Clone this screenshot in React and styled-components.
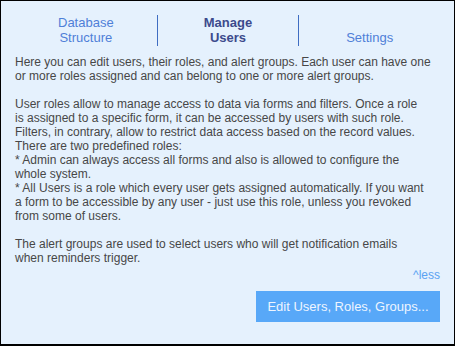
import styled, { createGlobalStyle } from "styled-components";

const Global = createGlobalStyle`
  html, body {
    margin: 0;
    padding: 0;
    background: #fff;
  }
`;

export const Panel = styled.div`
  width: 455px;
  height: 346px;
  box-sizing: border-box;
  border: 1px solid #000;
  border-bottom-width: 2px;
  background: #e5f1fd;
  font-family: "Liberation Sans", Arial, sans-serif;
  padding: 14px 14px 0 14px;
`;

export const Tabs = styled.div`
  display: grid;
  grid-template-columns: 1fr 1fr 1fr;
  height: 31px;
  margin-bottom: 9px;
`;

export const Tab = styled.div`
  display: flex;
  align-items: flex-end;
  justify-content: center;
  text-align: center;
  font-size: 13px;
  line-height: 15px;
  color: ${(p) => (p.$active ? "#3c4a8c" : "#4f7fd8")};
  font-weight: ${(p) => (p.$active ? 700 : 400)};
  border-left: ${(p) => (p.$divider ? "1px solid #3f6dc2" : "none")};
  padding-bottom: 1px;
`;

export const Text = styled.p`
  margin: 0 0 14px 0;
  font-size: 12px;
  line-height: 14px;
  color: #474747;
  white-space: nowrap;
`;

export const Less = styled.div`
  text-align: right;
  font-size: 12px;
  line-height: 14px;
  color: #5aa2f2;
  margin-top: -11px;
`;

export const ButtonRow = styled.div`
  display: flex;
  justify-content: flex-end;
  margin-top: 9px;
`;

export const Button = styled.button`
  background: #58a8f8;
  color: #eef5ff;
  border: none;
  font-family: "Liberation Sans", Arial, sans-serif;
  font-size: 13px;
  height: 31px;
  width: 184px;
  padding: 0;
`;

export default function App() {
  return (
    <>
      <Global />
      <Panel>
        <Tabs>
          <Tab>
            Database
            <br />
            Structure
          </Tab>
          <Tab $active $divider>
            Manage
            <br />
            Users
          </Tab>
          <Tab $divider>Settings</Tab>
        </Tabs>
        <Text>
          Here you can edit users, their roles, and alert groups. Each user can have one
          <br />
          or more roles assigned and can belong to one or more alert groups.
        </Text>
        <Text>
          User roles allow to manage access to data via forms and filters. Once a role
          <br />
          is assigned to a specific form, it can be accessed by users with such role.
          <br />
          Filters, in contrary, allow to restrict data access based on the record values.
          <br />
          There are two predefined roles:
          <br />
          * Admin can always access all forms and also is allowed to configure the
          <br />
          whole system.
          <br />
          * All Users is a role which every user gets assigned automatically. If you want
          <br />
          a form to be accessible by any user - just use this role, unless you revoked
          <br />
          from some of users.
        </Text>
        <Text>
          The alert groups are used to select users who will get notification emails
          <br />
          when reminders trigger.
        </Text>
        <Less>^less</Less>
        <ButtonRow>
          <Button>Edit Users, Roles, Groups...</Button>
        </ButtonRow>
      </Panel>
    </>
  );
}
